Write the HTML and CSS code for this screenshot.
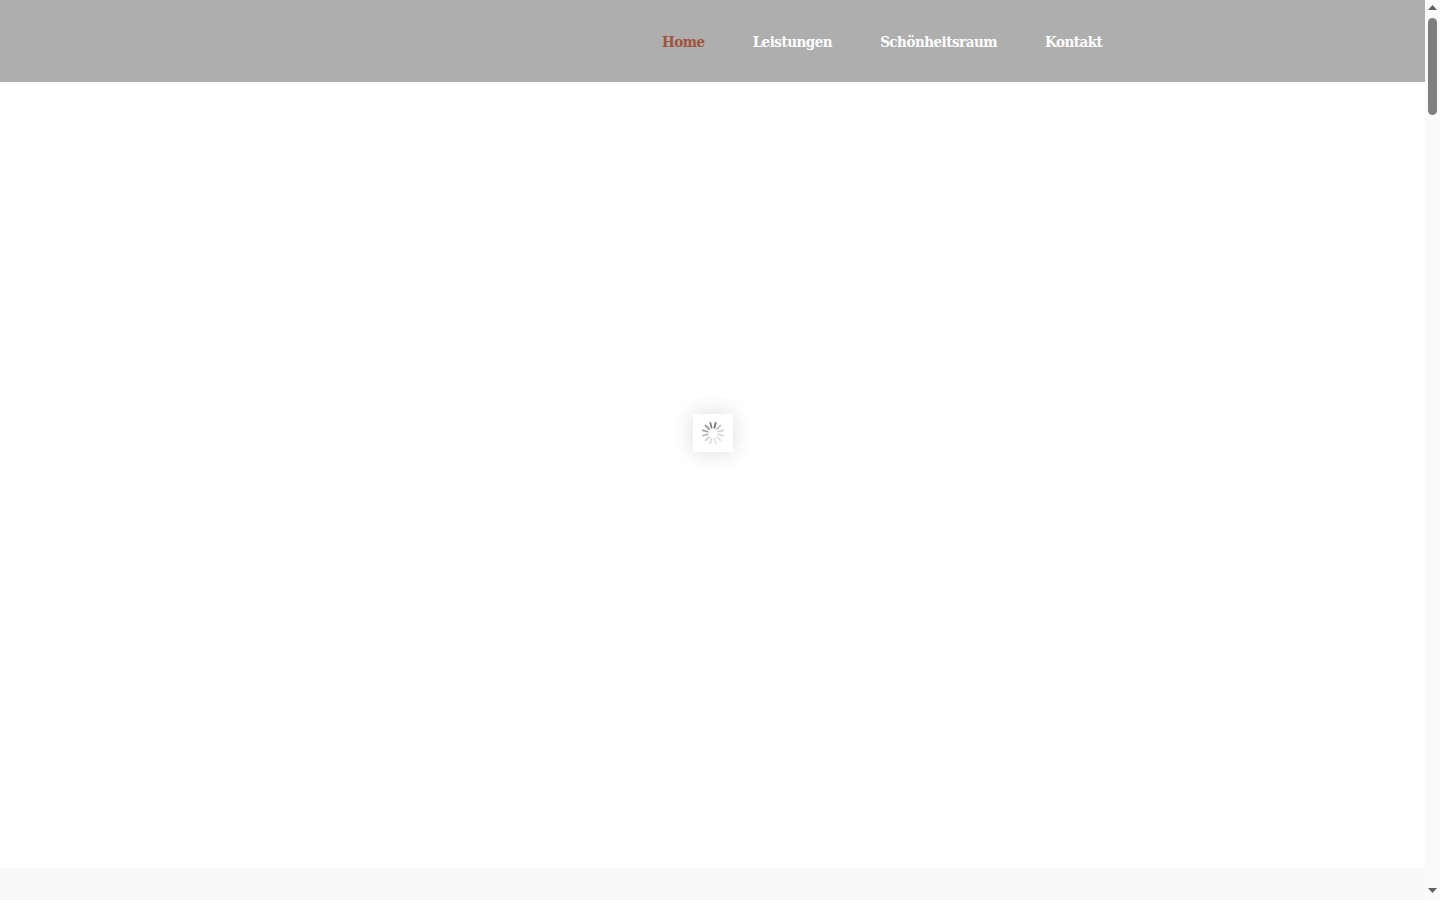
FILE: index.html
```html
<!DOCTYPE html>
<html lang="de">
<head>
<meta charset="utf-8">
<title>Home</title>
<link rel="stylesheet" href="styles.css">
</head>
<body>
<div class="page">
  <div class="content">
    <header class="site-header">
      <nav class="nav">
        <a class="nav-link active" href="#">Home</a>
        <a class="nav-link" href="#">Leistungen</a>
        <a class="nav-link" href="#">Schönheitsraum</a>
        <a class="nav-link" href="#">Kontakt</a>
      </nav>
    </header>
    <main class="main"></main>
    <footer class="footer"></footer>
  </div>
  <aside class="scrollbar">
    <svg class="arrow" width="15" height="17" viewBox="0 0 15 17"><path d="M7.5 5 L12 10 H3 Z" fill="#5f5f5f"/></svg>
    <div class="track"><div class="thumb"></div></div>
    <svg class="arrow arrow-down" width="15" height="17" viewBox="0 0 15 17"><path d="M3 5 H12 L7.5 10 Z" fill="#5f5f5f"/></svg>
  </aside>
</div>
<div class="loader">
  <svg width="24" height="24" viewBox="0 0 24 24" fill="none" stroke-width="1.8" stroke-linecap="round">
    <g stroke="#6a6a6a">
      <line x1="12" y1="1.5" x2="12" y2="6.5" transform="rotate(15 12 12)" opacity=".95"/>
      <line x1="12" y1="1.5" x2="12" y2="6.5" transform="rotate(45 12 12)" opacity=".4"/>
      <line x1="12" y1="1.5" x2="12" y2="6.5" transform="rotate(75 12 12)" opacity=".3"/>
      <line x1="12" y1="1.5" x2="12" y2="6.5" transform="rotate(105 12 12)" opacity=".25"/>
      <line x1="12" y1="1.5" x2="12" y2="6.5" transform="rotate(135 12 12)" opacity=".2"/>
      <line x1="12" y1="1.5" x2="12" y2="6.5" transform="rotate(165 12 12)" opacity=".18"/>
      <line x1="12" y1="1.5" x2="12" y2="6.5" transform="rotate(195 12 12)" opacity=".22"/>
      <line x1="12" y1="1.5" x2="12" y2="6.5" transform="rotate(225 12 12)" opacity=".3"/>
      <line x1="12" y1="1.5" x2="12" y2="6.5" transform="rotate(255 12 12)" opacity=".45"/>
      <line x1="12" y1="1.5" x2="12" y2="6.5" transform="rotate(285 12 12)" opacity=".6"/>
      <line x1="12" y1="1.5" x2="12" y2="6.5" transform="rotate(315 12 12)" opacity=".7"/>
      <line x1="12" y1="1.5" x2="12" y2="6.5" transform="rotate(345 12 12)" opacity=".85"/>
    </g>
  </svg>
</div>
</body>
</html>
```
FILE: styles.css
```css
* { box-sizing: border-box; }
html, body { margin: 0; height: 100%; overflow: hidden; background: #fff; }
.page { display: flex; height: 900px; }
.content { flex: 1; display: flex; flex-direction: column; min-width: 0; }
.site-header { height: 82px; background: #aeaeae; display: flex; align-items: center; padding: 2px 0 0 662px; }
.nav { display: flex; gap: 48px; }
.nav-link { font-family: "DejaVu Serif Condensed", "DejaVu Serif", serif; font-weight: bold; font-size: 15px; line-height: 1; font-stretch: condensed; color: #fff; text-decoration: none; letter-spacing: -0.5px; }
.nav-link.active { color: #a0533c; }
.main { flex: 1; background: #fff; }
.footer { height: 32px; background: #f9f9f9; }
.scrollbar { width: 15px; background: #fafafa; display: flex; flex-direction: column; }
.arrow { display: block; flex: none; }
.track { flex: 1; padding: 1px 3px 0; }
.thumb { height: 97px; background: #7f7f7f; border-radius: 5px; }
.loader { position: absolute; left: 693px; top: 414px; width: 40px; height: 38px; background: #fff; box-shadow: 0 0 22px rgba(0,0,0,.15); display: flex; align-items: center; justify-content: center; }
```
